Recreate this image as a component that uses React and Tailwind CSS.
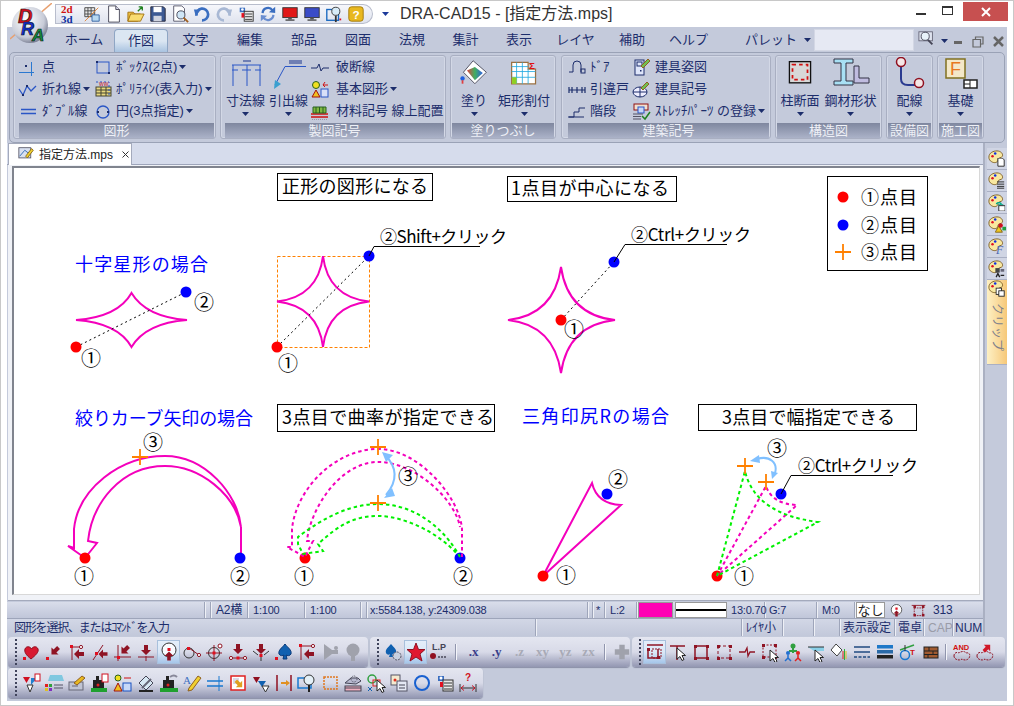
import React from 'react';

const R = '#8f1424';
const NAVY = '#1c2d6b';
const BLUE = '#2a56c6';

// fat arrow, pointing down at rot=0
const Arr = ({ x = 10, y = 9, rot = 0, s = 1, c = R }) => (
  <polygon transform={`translate(${x} ${y}) rotate(${rot}) scale(${s})`} points="-2,-5 2,-5 2,0 5,0 0,5 -5,0 -2,0" fill={c} />
);
const Sq = ({ x, y, s = 3, c = '#e01020' }) => <rect x={x} y={y} width={s} height={s} fill={c} />;
const Hole = ({ x, y, r = 1.6, c = R }) => <circle cx={x} cy={y} r={r} fill="#fff" stroke={c} />;
const Ic = ({ s = 20, w, h, box, children }) => (
  <svg width={w || s} height={h || s} viewBox={box || '0 0 20 20'} className="shrink-0" fill="none">{children}</svg>
);
const Q = ({ children }) => <Ic s={18}>{children}</Ic>;
const Cursor = ({ x = 9, y = 7 }) => (
  <path transform={`translate(${x} ${y})`} d="M0 0V11L3 8.500L5 12.500L7 11.500L5 7.500H8.500Z" fill="#fff" stroke="#222" />
);
const Red4 = ({ a = 4, b = 15 }) => (
  <>
    <Sq x={a - 1} y={a - 1} c={R} /><Sq x={b - 1} y={a - 1} c={R} /><Sq x={a - 1} y={b - 1} c={R} /><Sq x={b - 1} y={b - 1} c={R} />
  </>
);

// quick access toolbar
const qat = [
  <Ic key="a"><text x="1" y="9" fontSize="11" fontWeight="700" fontFamily="Liberation Serif" fill="#d01010">2d</text><text x="1" y="19" fontSize="11" fontWeight="700" fontFamily="Liberation Serif" fill="#1030a0">3d</text></Ic>,
  <Q key="b"><path d="M2 3H13V13H2ZM2 6.500H13M2 10H13M5.500 3V13M9 3V13" stroke="#444" fill="#e8e8e8" /><path d="M2 18L17 3" stroke="#e08030" /><path d="M10 11H18V18H10Z" fill="#b8d8f0" stroke="#3060a0" /></Q>,
  <Q key="c"><path d="M4 1H12L16 5V19H4Z" fill="#fff" stroke="#445" /><path d="M12 1V5H16" stroke="#445" fill="#dde" /></Q>,
  <Q key="d"><path d="M1 8H7L9 10H15L12 18H1Z" fill="#f0c040" stroke="#a07010" /><path d="M1 18L4 10H19L15 18Z" fill="#f8dc70" stroke="#a07010" /><path d="M12 7L17 2M17 2H13M17 2V6" stroke="#208020" strokeWidth="1.500" /></Q>,
  <Q key="e"><path d="M2 2H16L18 4V18H2Z" fill="#3d5a94" stroke="#223" /><rect x="5" y="2" width="9" height="6" fill="#fff" /><rect x="5" y="12" width="9" height="6" fill="#d0d4e0" /></Q>,
  <Q key="f"><path d="M3 1H12L15 4V18H3Z" fill="#fff" stroke="#556" /><circle cx="11" cy="11" r="4.500" fill="#cfe6f6" stroke="#445" /><path d="M14 14L19 19" stroke="#a06020" strokeWidth="2" /></Q>,
  <Q key="g"><path d="M4 12A6.500 6.500 0 1 1 10 17" stroke="#3a6ec0" strokeWidth="3" /><polygon points="1,5 9,5 3,12" fill="#3a6ec0" /></Q>,
  <Q key="h"><path d="M16 12A6.500 6.500 0 1 0 10 17" stroke="#a8b8d4" strokeWidth="3" /><polygon points="19,5 11,5 17,12" fill="#a8b8d4" /></Q>,
  <Q key="i"><path d="M3 3H9V8H3Z" fill="#3a6ec0" /><circle cx="6" cy="5" r="1.500" fill="#fff" /><rect x="8" y="7" width="10" height="11" fill="#e8e8e8" stroke="#333" /><path d="M9 10H17M9 13H17M9 16H17" stroke="#333" /><rect x="5" y="9" width="3" height="5" fill="#e01020" /></Q>,
  <Q key="j"><path d="M4 9A6 6 0 0 1 15 6" stroke="#3a6ec0" strokeWidth="2.500" /><polygon points="18,2 18,9 11,8" fill="#3a6ec0" /><path d="M16 11A6 6 0 0 1 5 14" stroke="#6a8ed0" strokeWidth="2.500" /><polygon points="2,18 2,11 9,12" fill="#6a8ed0" /></Q>,
  <Q key="k"><rect x="2" y="3" width="16" height="11" fill="#e01818" stroke="#333" /><rect x="8" y="14" width="4" height="2" fill="#555" /><rect x="5" y="16" width="10" height="1.500" fill="#444" /></Q>,
  <Q key="l"><rect x="2" y="3" width="16" height="11" fill="#3a4cc8" stroke="#333" /><rect x="8" y="14" width="4" height="2" fill="#555" /><rect x="5" y="16" width="10" height="1.500" fill="#444" /></Q>,
  <Q key="m"><rect x="2" y="5" width="13" height="12" stroke="#1868c0" strokeWidth="1.500" /><circle cx="12" cy="7" r="4.500" fill="#d8ecf8" stroke="#333" /><path d="M12 12V19" stroke="#333" strokeWidth="2" /><Sq x="16" y="15" s="2" /></Q>,
  <Q key="n"><rect x="2" y="2" width="16" height="16" rx="3" fill="#e8b820" stroke="#a07808" /><text x="10" y="15" textAnchor="middle" fontSize="13" fontWeight="700" fontFamily="Liberation Sans" fill="#fff">?</text></Q>,
];

// ribbon small icons
const rb = {
  point: <Ic><path d="M1 15.500H16M13.500 5V19" stroke="#2a78d0" /><rect x="7" y="8" width="2" height="2" fill={NAVY} /></Ic>,
  box: <Ic><rect x="4" y="5" width="12" height="11" stroke={BLUE} /><rect x="3" y="4" width="2" height="2" fill={NAVY} /><rect x="15" y="15" width="2" height="2" fill={NAVY} /></Ic>,
  poly: <Ic><path d="M1 10L5 16L9 7L13 12L18 7" stroke={BLUE} strokeWidth="1.300" /><rect x="4" y="15" width="2" height="2" fill={NAVY} /><rect x="8" y="6" width="2" height="2" fill={NAVY} /></Ic>,
  table: <Ic><rect x="3" y="8" width="15" height="9" fill="#e8d880" stroke="#443" /><path d="M3 11H18M3 14H18M8 8V17M13 8V17" stroke="#443" /><path d="M3 3H16V18" stroke={BLUE} strokeDasharray="2 2" /><text x="6" y="7" fontSize="5" fill="#d01010" fontFamily="Liberation Sans">WW</text></Ic>,
  dbl: <Ic><path d="M3 8.500H18M3 12.500H18" stroke={BLUE} strokeWidth="1.400" /></Ic>,
  circ: <Ic><circle cx="10" cy="11" r="6" stroke={BLUE} strokeWidth="1.300" /><rect x="4" y="10" width="2" height="2" fill={NAVY} /><rect x="14" y="10" width="2" height="2" fill={NAVY} /></Ic>,
  brk: <Ic><path d="M1 11H7L9 7L11 14L13 11H19" stroke={NAVY} /></Ic>,
  shape: <Ic><circle cx="6" cy="6" r="3.500" fill="#f0e020" stroke="#286020" /><polygon points="6,11 10,18 2,18" fill="#f0c020" stroke="#a01010" /><rect x="11" y="10" width="7" height="8" fill="#d8e0f8" stroke={BLUE} /><path d="M18 6H13M13 6L15 3M13 6L15 8" stroke="#d01010" /></Ic>,
  mat: <Ic><path d="M1 13H18M1 16H18" stroke="#d01010" strokeWidth="1.400" /><path d="M3 6H16V12H3Z" fill="#80b840" stroke="#286020" /><path d="M6 6V12M9.500 6V12M13 6V12" stroke="#286020" /><path d="M2 18.500H18" stroke="#99a" strokeDasharray="1 1" /></Ic>,
  door: <Ic><path d="M2 15H6V8A4 4 0 0 1 14 8V15" stroke={NAVY} /><rect x="14" y="12" width="4" height="4" stroke={NAVY} /></Ic>,
  slide: <Ic><path d="M2 8V14M5 8V14M15 8V14M18 8V14M2 11H18M10 8V14" stroke={NAVY} strokeWidth="1.200" /></Ic>,
  stair: <Ic><path d="M1 16H17M2 16H7V11H12V7H18" stroke={NAVY} /></Ic>,
  fig: <Ic><rect x="4" y="3" width="9" height="15" fill="#dfe6fa" stroke={NAVY} /><rect x="6" y="5" width="5" height="4" stroke={NAVY} /><rect x="9" y="13" width="1.500" height="1.500" fill={NAVY} /><path d="M10 9L17 2L19 4L12 11Z" fill="#70c050" stroke="#906020" /></Ic>,
  sym: <Ic><ellipse cx="9" cy="13" rx="7" ry="5" fill="#eef" stroke={NAVY} /><path d="M2 13H16M9 8V18" stroke={NAVY} /><path d="M10 9L16 3L18 5L12 11Z" fill="#70c050" stroke="#906020" /></Ic>,
  stretch: <Ic><rect x="3" y="3" width="14" height="6" fill="#f0e0d0" stroke="#901010" /><rect x="7" y="6" width="6" height="6" fill="#c8d8f8" stroke={BLUE} /><path d="M2 13H12M2 15.500H10M2 18H10" stroke="#556" /><path d="M11 15L14 18L19 11" stroke="#208020" strokeWidth="1.500" /></Ic>,
};

// ribbon large icons
const lg = {
  dim: <Ic w={34} h={34} box="0 0 34 34"><rect x="14" y="3" width="8" height="2" fill="#6f7fb4" /><path d="M3 8H32" stroke={BLUE} /><path d="M3 13H9M13 13H22M26 13H32" stroke={BLUE} /><path d="M4 8V29M18 8V29M31 8V29" stroke={BLUE} /></Ic>,
  lead: <Ic w={34} h={34} box="0 0 34 34"><rect x="17" y="3" width="13" height="4" fill="#6f7fb4" /><path d="M34 9.500H13L3 28" stroke={BLUE} /><polygon points="2,32 3,23 9,27" fill="#3aa0d0" /></Ic>,
  fill: <Ic w={30} h={30} box="0 0 34 34"><polygon points="16,2 31,15 18,28 5,15" fill="#fff" stroke="#445" /><defs><linearGradient id="pg" x1="0" x2="1"><stop offset="0" stopColor="#e04040" /><stop offset=".5" stopColor="#40b060" /><stop offset="1" stopColor="#3060e0" /></linearGradient></defs><polygon points="9,13 18,9 27,16 18,24" fill="url(#pg)" /><circle cx="4" cy="22" r="2.500" fill="#2060e0" /><path d="M4 24V28" stroke="#e04040" strokeWidth="2" /></Ic>,
  grid: <Ic w={28} h={28} box="0 0 34 34"><path d="M2 3H22V11H31V29H2Z" fill="#fff" stroke="#9a7040" strokeWidth="1.500" /><path d="M2 8H22M2 14H31M2 21H31M8 3V29M15 3V29M22 11V29" stroke="#20a8e0" /><rect x="2.500" y="21" width="5.500" height="8" fill="#90d020" /><text x="23" y="11" fontSize="12" fontWeight="700" fill="#e01010" fontFamily="Liberation Sans">Σ</text></Ic>,
  col: <Ic w={30} h={30} box="0 0 34 34"><rect x="5" y="3" width="24" height="24" fill="#d8d8d8" stroke="#111" strokeWidth="1.500" /><rect x="8.500" y="6.500" width="17" height="17" stroke="#d01010" strokeWidth="2" strokeDasharray="4 3.500" /></Ic>,
  steel: <Ic w={44} h={34} box="0 0 44 34"><path d="M5 2H24V6H17V24H24V28H5V24H12V6H5Z" fill="#a8e0f4" stroke="#334" /><path d="M25 9H30V21H40V26H25Z" fill="#c0bce0" stroke="#334" /></Ic>,
  wire: <Ic w={34} h={34} box="0 0 34 34"><path d="M8 9V22Q8 28 15 28H22" stroke="#2a3a90" strokeWidth="2" /><circle cx="8" cy="5" r="4.500" fill="#f4e6e6" stroke="#901020" strokeWidth="1.500" /><circle cx="26" cy="26" r="4.500" fill="#f4e6e6" stroke="#901020" strokeWidth="1.500" /></Ic>,
  base: <Ic w={36} h={34} box="0 0 36 34"><rect x="3" y="2" width="19" height="19" fill="#f4e8c8" stroke="#807020" strokeWidth="1.500" /><text x="12.500" y="18" textAnchor="middle" fontSize="18" fill="#e87820" fontFamily="Liberation Sans">F</text><rect x="21" y="23" width="13" height="8" fill="#fff" stroke="#222" strokeWidth="1.500" /><path d="M27 23V31M21 27H27" stroke="#222" /></Ic>,
};

const Caret = ({ c = 'text-[#1c2d6b]' }) => (
  <svg width="7" height="4" viewBox="0 0 7 4" className={`shrink-0 ${c}`}><polygon points="0,0 7,0 3.500,4" fill="currentColor" /></svg>
);

const Small = ({ icon, label, caret, gap = 'gap-[4px]' }) => (
  <div className={`flex items-center h-[22px] whitespace-nowrap ${gap}`}>
    {icon}
    <span className="flex items-center gap-[2px]">{label}{caret && <Caret />}</span>
  </div>
);

const Large = ({ icon, label, w }) => (
  <div className={`flex flex-col items-center ${w}`}>
    <div className="h-[36px] flex items-center justify-center">{icon}</div>
    <div className="h-[18px] leading-[18px] whitespace-nowrap">{label}</div>
    <div className="h-[8px] flex items-center"><Caret /></div>
  </div>
);

const Group = ({ title, w, className = '', children }) => (
  <div className={`${w} ${className} h-[84px] flex flex-col border border-[#a9afc2] rounded-[3px] shadow-[inset_0_0_0_1px_#d3d8e6]`}>
    <div className="h-[67px] flex">{children}</div>
    <div className="h-[15px] mx-px bg-gradient-to-b from-[#7f879f] to-[#abb2c8] text-center text-[13px] leading-[16px] text-[#eef0f6]">{title}</div>
  </div>
);

const tabs = [
  ['ホーム', 'w-[57px] pr-[3px]'], ['作図', 'w-[54px]', true], ['文字', 'w-[55px]'], ['編集', 'w-[54px]'], ['部品', 'w-[54px]'], ['図面', 'w-[54px]'],
  ['法規', 'w-[54px]'], ['集計', 'w-[53px]'], ['表示', 'w-[54px]'], ['レイヤ', 'w-[59px]'], ['補助', 'w-[54px]'], ['ヘルプ', 'w-[59px]'],
];

function TitleBar() {
  return (
    <div className="h-[26px] flex items-center pl-[54px] bg-white shrink-0">
      <div className="w-[318px] h-[20px] flex items-center pl-[3px] rounded-r-full rounded-l-[4px] border border-[#b8bdcc] bg-gradient-to-b from-[#f6f7fb] to-[#dfe3ee]">
        {qat.map((icon, i) => <div key={i} className="w-[22px] flex justify-center">{icon}</div>)}
      </div>
      <div className="ml-[9px] mr-[11px]"><Caret c="text-[#1c3a9a]" /></div>
      <div className="text-[16px] text-[#333]">DRA-CAD15 - [指定方法.mps]</div>
      <div className="ml-auto flex items-start self-start h-[21px] mr-[5px]">
        <div className="w-[26px] h-[19px] flex items-center justify-center"><div className="w-[10px] h-[2px] mt-[6px] bg-[#333]" /></div>
        <div className="w-[26px] h-[19px] mr-[3px] flex items-center justify-center"><div className="w-[11px] h-[9px] border border-t-2 border-[#333]" /></div>
        <div className="w-[45px] h-[19px] mt-[1px] bg-[#c75050] flex items-center justify-center">
          <svg width="10" height="10" viewBox="0 0 10 10"><path d="M1 1L9 9M9 1L1 9" stroke="#fff" strokeWidth="2" /></svg>
        </div>
      </div>
    </div>
  );
}

function TabRow() {
  return (
    <div className="h-[25px] flex items-end pl-[50px] text-[13px] text-[#1c2d6b] shrink-0">
      {tabs.map(([t, w, on]) => (
        <div key={t} className={`${w} text-center flex items-center justify-center ${on ? 'h-[23px] rounded-t-[4px] border border-b-0 border-[#8fa6c4] bg-gradient-to-b from-[#dbe6f2] via-[#dbe6f2] to-[#a9c3e0]' : 'h-[24px]'}`}>{t}</div>
      ))}
      <div className="ml-[27px] w-[70px] flex items-center gap-[7px] h-[24px] whitespace-nowrap">パレット<Caret /></div>
      <div className="ml-[-1px] mb-px w-[100px] h-[22px] bg-[#e6e9f3] border border-[#d3d7e4]" />
      <div className="ml-[4px] mb-[2px] h-[22px] flex items-center">
        <Ic s={18}><rect x="1" y="2" width="15" height="10" fill="#dfe3ef" stroke="#667" /><circle cx="8" cy="7" r="4.500" fill="#e8f2fa" stroke="#445" /><path d="M11 11L16 16" stroke="#445" strokeWidth="2" /></Ic>
      </div>
      <div className="ml-[5px] mb-[9px]"><Caret /></div>
      <div className="ml-[6px] mb-[8px] w-[8px] h-[3px] bg-[#666]" />
      <div className="ml-[10px] mb-[4px]">
        <svg width="12" height="12" viewBox="0 0 12 12"><path d="M3.500 3V1H11V8H8.500M1 3.500H8.500V11H1Z" fill="none" stroke="#666" strokeWidth="1.200" /></svg>
      </div>
      <div className="ml-[8px] mb-[4px]">
        <svg width="13" height="13" viewBox="0 0 13 13"><path d="M2 2L11 11M11 2L2 11" stroke="#666" strokeWidth="2.500" /></svg>
      </div>
    </div>
  );
}

function Ribbon() {
  return (
    <div className="mx-[2px] h-[91px] shrink-0 border border-[#9aa2b6] rounded-[5px] pl-[3px] pt-[2px] flex gap-[4px]">
      <Group title="図形" w="w-[203px]" className="pl-[4px]">
        <div className="w-[75px]">
          <Small icon={rb.point} label="点" />
          <Small icon={rb.poly} label="折れ線" caret />
          <Small icon={rb.dbl} label="ﾀﾞﾌﾞﾙ線" />
        </div>
        <div>
          <Small icon={rb.box} label="ﾎﾞｯｸｽ(2点)" caret gap="gap-[3px]" />
          <Small icon={rb.table} label="ﾎﾟﾘﾗｲﾝ(表入力)" caret gap="gap-[3px]" />
          <Small icon={rb.circ} label="円(3点指定)" caret gap="gap-[3px]" />
        </div>
      </Group>
      <Group title="製図記号" w="w-[226px]" className="pl-[3px]">
        <Large icon={lg.dim} label="寸法線" w="w-[43px]" />
        <Large icon={lg.lead} label="引出線" w="w-[43px]" />
        <div>
          <Small icon={rb.brk} label="破断線" gap="gap-[6px]" />
          <Small icon={rb.shape} label="基本図形" caret gap="gap-[6px]" />
          <Small icon={rb.mat} label="材料記号 線上配置" gap="gap-[6px]" />
        </div>
      </Group>
      <Group title="塗りつぶし" w="w-[106px]">
        <Large icon={lg.fill} label="塗り" w="w-[46px]" />
        <Large icon={lg.grid} label="矩形割付" w="w-[54px]" />
      </Group>
      <Group title="建築記号" w="w-[210px]" className="ml-[1px] pl-[5px]">
        <div className="w-[64px]">
          <Small icon={rb.door} label="ﾄﾞｱ" gap="gap-[3px]" />
          <Small icon={rb.slide} label="引違戸" gap="gap-[3px]" />
          <Small icon={rb.stair} label="階段" gap="gap-[3px]" />
        </div>
        <div>
          <Small icon={rb.fig} label="建具姿図" />
          <Small icon={rb.sym} label="建具記号" />
          <Small icon={rb.stretch} label="ｽﾄﾚｯﾁﾊﾟｰﾂ の登録" caret />
        </div>
      </Group>
      <Group title="構造図" w="w-[107px]">
        <Large icon={lg.col} label="柱断面" w="w-[48px]" />
        <Large icon={lg.steel} label="鋼材形状" w="w-[53px]" />
      </Group>
      <Group title="設備図" w="w-[47px]">
        <Large icon={lg.wire} label="配線" w="w-full" />
      </Group>
      <Group title="施工図" w="w-[47px]">
        <Large icon={lg.base} label="基礎" w="w-full" />
      </Group>
    </div>
  );
}

const CircleNo = ({ x, y, n, s = 20 }) => (
  <text x={x} y={y + 7} textAnchor="middle" fontSize={s} fill="#000">{n}</text>
);
const Plus = ({ x, y, s = 8 }) => (
  <path d={`M${x - s} ${y}H${x + s}M${x} ${y - s}V${y + s}`} stroke="#ff8000" strokeWidth="1.800" />
);
const Dot = ({ x, y, c }) => <circle cx={x} cy={y} r="5.500" fill={c} />;
const Boxed = ({ x, y, w, h, tx, len, children }) => (
  <>
    <rect x={x + 0.5} y={y + 0.5} width={w} height={h} fill="#fff" stroke="#000" />
    <text x={tx} y={y + h / 2 + 6.500} fontSize="18" fill="#000" textLength={len}>{children}</text>
  </>
);
const Title = ({ x, y, len, children }) => (
  <text x={x} y={y + 6.500} fontSize="18" fill="#0000ff" textLength={len}>{children}</text>
);
const LegendRow = ({ y, n }) => (
  <text x="861" y={y} fontSize="18" fill="#000" textLength={56}>{n}点目</text>
);

const PINK = '#f400bc';
const GREEN = '#00f000';
const magentaArrow = 'M462 558V530C460 500 420 450 378 450C335 450 296 490 292 530V548L287 548L305 558L313 542L307 542C310 510 340 463 378 463C415 463 455 500 460 528';
const greenArrow = 'M460 558C445 530 415 505 378 505C345 505 315 525 298 538V545L303 555L323 552L318 545C335 530 350 517 378 517C405 517 440 535 457 555';

function Drawing() {
  return (
    <svg width="966" height="426" viewBox="14 169 966 426" className="block font-['Noto_Sans_CJK_JP',sans-serif]" fill="none">
      <Boxed x={277} y={174} w={155} h={27} tx={282} len={146}>正形の図形になる</Boxed>
      <Boxed x={507} y={177} w={169} h={25} tx={511} len={158}>1点目が中心になる</Boxed>
      <Boxed x={277} y={405} w={217} h={27} tx={282} len={212}>3点目で曲率が指定できる</Boxed>
      <Boxed x={698} y={405} w={218} h={26} tx={722} len={173}>3点目で幅指定できる</Boxed>

      <Title x={75} y={265} len={133}>十字星形の場合</Title>
      <Title x={75} y={419} len={178}>絞りカーブ矢印の場合</Title>
      <Title x={522} y={417} len={147}>三角印尻Rの場合</Title>

      {/* legend */}
      <rect x="827.500" y="177.500" width="100" height="94" fill="#fff" stroke="#000" />
      <Dot x={843} y={198} c="#ff0000" />
      <Dot x={843} y={226} c="#0000ff" />
      <Plus x={843} y={253} />
      <LegendRow y={205} n="①" />
      <LegendRow y={233} n="②" />
      <LegendRow y={260} n="③" />

      {/* star 1 */}
      <path d="M76 321Q118 318 131.500 294Q146 318 187 321Q146 324 131.500 348Q118 324 76 321Z" stroke={PINK} strokeWidth="2" />
      <path d="M76 348L186 293" stroke="#000" strokeDasharray="2 3" />
      <Dot x={76} y={348} c="#ff0000" />
      <Dot x={186} y={293} c="#0000ff" />
      <CircleNo x={91} y={360} n="①" />
      <CircleNo x={204} y={304} n="②" />

      {/* star 2 */}
      <rect x="277.500" y="257.500" width="92" height="91" stroke="#ff8000" strokeDasharray="3 2" />
      <path d="M277 302.500Q318 298 323 257Q328 298 369 302.500Q328 307 323 348Q318 307 277 302.500Z" stroke={PINK} strokeWidth="2" />
      <path d="M277 348L369 257" stroke="#000" strokeDasharray="2 3" />
      <Dot x={277} y={348} c="#ff0000" />
      <Dot x={369} y={257} c="#0000ff" />
      <path d="M369 257L374 247.500H480" stroke="#000" />
      <CircleNo x={288} y={365} n="①" />
      <text x="380" y="244" fontSize="17" fill="#000" textLength={127}>②Shift+クリック</text>

      {/* star 3 */}
      <path d="M508 321Q554 316 561 268Q568 316 615 321Q568 326 561 374Q554 326 508 321Z" stroke={PINK} strokeWidth="2" />
      <path d="M561 321L614 263" stroke="#000" strokeDasharray="2 3" />
      <Dot x={561} y={321} c="#ff0000" />
      <Dot x={614} y={263} c="#0000ff" />
      <path d="M614 263L625 245.500H727" stroke="#000" />
      <CircleNo x={574} y={331} n="①" />
      <text x="631" y="242" fontSize="17" fill="#000" textLength={120}>②Ctrl+クリック</text>

      {/* curved arrow */}
      <path d="M241 558V528C238 495 205 457 165 457C120 457 78 490 74 530V549L68 547L85 559L97 544L88 542C92 505 120 467 165 467C200 467 235 495 241 528" stroke={PINK} strokeWidth="2" />
      <Plus x={140} y={458} />
      <Dot x={85} y={559} c="#ff0000" />
      <Dot x={240} y={559} c="#0000ff" />
      <CircleNo x={153} y={444} n="③" />
      <CircleNo x={84} y={578} n="①" />
      <CircleNo x={240} y={578} n="②" />

      {/* curved arrow, two states */}
      <Dot x={305} y={559} c="#ff0000" />
      <Dot x={460} y={559} c="#0000ff" />
      <path d={magentaArrow} stroke={PINK} strokeWidth="2" strokeDasharray="3.500 3" />
      <path d={greenArrow} stroke={GREEN} strokeWidth="2" strokeDasharray="3.500 3" />
      <Plus x={378} y={448} />
      <Plus x={378} y={504} />
      <path d="M385 456C399 470 396 484 386 496" stroke="#80c0ff" strokeWidth="2" />
      <polygon points="382,453 393,456 386,463" fill="#80c0ff" />
      <polygon points="384,499 392,489 395,497" fill="#80c0ff" />
      <CircleNo x={408} y={478} n="③" />
      <CircleNo x={304} y={578} n="①" />
      <CircleNo x={463} y={578} n="②" />

      {/* triangle */}
      <path d="M543 577L592 484Q597 505 621 506Z" stroke={PINK} strokeWidth="2" />
      <Dot x={543} y={577} c="#ff0000" />
      <Dot x={607} y={495} c="#0000ff" />
      <CircleNo x={618} y={481} n="②" />
      <CircleNo x={566} y={577} n="①" />

      {/* triangle, two states */}
      <Dot x={717} y={577} c="#ff0000" />
      <Dot x={781} y={495} c="#0000ff" />
      <path d="M717 577L766 487Q772 505 797 506L717 577Z" stroke={PINK} strokeWidth="2" strokeDasharray="3.500 3" />
      <path d="M717 577L745 472Q755 515 818 523L717 577Z" stroke={GREEN} strokeWidth="2" strokeDasharray="3.500 3" />
      <Plus x={745} y={467} />
      <Plus x={766} y={483} />
      <path d="M757 460C770 456 778 464 775 474" stroke="#80c0ff" strokeWidth="2" />
      <polygon points="750,462 759,456 760,464" fill="#80c0ff" />
      <polygon points="772,480 771,472 778,474" fill="#80c0ff" />
      <path d="M781 495L791 476.500H893" stroke="#000" />
      <CircleNo x={777} y={450} n="③" />
      <CircleNo x={744} y={578} n="①" />
      <text x="798" y="473" fontSize="17" fill="#000" textLength={120}>②Ctrl+クリック</text>
    </svg>
  );
}

const Cell = ({ w, className = '', children }) => (
  <div className={`${w} h-full flex items-center shrink-0 whitespace-nowrap border-r border-[#9ea5ba] shadow-[1px_0_0_#eef0f6] ${className}`}>{children}</div>
);

function StatusBars() {
  return (
    <>
      <div className="h-[17px] mt-px flex shrink-0 text-[11px] tracking-[-0.2px] text-[#1c2d6b] bg-gradient-to-b from-[#d9ddea] to-[#c0c6d9] border-b border-[#9ea5ba]">
        <Cell w="w-[198px]" />
        <Cell w="w-[6px]" />
        <Cell w="w-[37px]" className="pl-[5px] text-[12px]">A2横</Cell>
        <Cell w="w-[57px]" className="pl-[5px]">1:100</Cell>
        <Cell w="w-[56px]" className="pl-[5px]">1:100</Cell>
        <Cell w="w-[6px]" />
        <Cell w="w-[221px]" className="pl-[3px]">x:5584.138, y:24309.038</Cell>
        <Cell w="w-[5px]" />
        <Cell w="w-[12px]" className="pl-[3px]">*</Cell>
        <Cell w="w-[32px]" className="pl-[5px]">L:2</Cell>
        <div className="w-[38px] h-full shrink-0 pl-px pr-[2px]"><div className="h-full bg-[#ff00b4] border border-[#999]" /></div>
        <div className="w-[52px] h-full shrink-0 bg-white border border-[#999] flex items-center"><div className="w-full h-[2px] bg-black" /></div>
        <Cell w="w-[38px]" className="pl-[4px]">13:0.70</Cell>
        <Cell w="w-[52px]" className="pl-[4px]">G:7</Cell>
        <Cell w="w-[38px]" className="pl-[5px]">M:0</Cell>
        <div className="w-[29px] h-full shrink-0 ml-[1px] bg-white border border-[#999] text-[13px] tracking-normal text-[#222] flex items-center justify-center leading-none">なし</div>
        <div className="w-[22px] h-full shrink-0 flex items-center justify-center">
          <Ic s={15}><circle cx="10" cy="9" r="7" fill="#fff" stroke="#333" /><rect x="8.500" y="6" width="3" height="3" fill="#e01020" /><Arr x={10} y={14} rot={180} s={0.8} /></Ic>
        </div>
        <div className="w-[22px] h-full shrink-0 flex items-center justify-center">
          <Ic s={17}><path d="M2 4H18" stroke={R} /><rect x="5" y="7" width="10" height="9" stroke={R} strokeDasharray="2 1" /><Red4 a={5} b={15} /></Ic>
        </div>
        <div className="ml-[4px] text-[12px] leading-[16px]">313</div>
      </div>
      <div className="h-[17px] flex shrink-0 text-[12px] text-[#1c2d6b] bg-gradient-to-b from-[#d2d7e6] to-[#c2c8da]">
        <Cell w="w-[529px]" className="pl-[7px] tracking-[-1.2px]">図形を選択、またはｺﾏﾝﾄﾞを入力</Cell>
        <Cell w="w-[206px]" />
        <Cell w="w-[41px]" className="pl-[4px]">ﾚｲﾔ小</Cell>
        <Cell w="w-[31px]" />
        <Cell w="w-[26px]" />
        <Cell w="w-[55px]" className="pl-[3px]">表示設定</Cell>
        <Cell w="w-[29px]" className="pl-[3px]">電卓</Cell>
        <Cell w="w-[29px]" className="pl-[4px] text-[#9a9ca8]">CAP</Cell>
        <div className="pl-[2px] flex items-center">NUM</div>
      </div>
    </>
  );
}

const Grip = () => (
  <div className="w-[6px] ml-[5px] shrink-0 flex flex-col gap-[2px] items-center">
    {[0, 1, 2, 3, 4, 5, 6].map(i => <div key={i} className="w-[2px] h-[2px] bg-[#40445c]" />)}
  </div>
);
const Sep = ({ m = 'mx-[8px]' }) => <div className={`w-[2px] h-[16px] bg-[#f4f5fa] border-l border-[#9095ad] shrink-0 ${m}`} />;
const Btn = ({ on, children }) => (
  <div className={`w-[23px] h-[24px] shrink-0 flex items-center justify-center ${on ? 'border border-[#a8c0dc] bg-gradient-to-b from-[#e4eefa] via-[#dbe8f6] to-[#a6c6ea]' : ''}`}>{children}</div>
);
const Bar = ({ className = '', children }) => (
  <div className={`h-[30px] flex items-center rounded-[4px] bg-gradient-to-b from-[#e4e6f0] via-[#d8dae8] to-[#9397b2] shadow-[0_1px_1px_#8a8ea6] ${className}`}>{children}</div>
);
const Axis = ({ t, off }) => (
  <Btn><span className={`font-['Liberation_Serif',serif] font-bold text-[13px] ${off ? 'text-[#a8aab6]' : 'text-[#3a3f8a]'}`}>{t}</span></Btn>
);

const GREY = '#a0a2ac';
const row1a = [
  <Ic key="1"><path d="M10 17C5 13 3 10 4 7C5 4 9 4 10.500 7C12 4 16 4 17 7C18 10 15 13 10 17Z" fill="#d81830" stroke="#901020" /><Sq x={2} y={15} /></Ic>,
  <Ic key="2"><Arr x={11} y={9} rot={45} /><Sq x={2} y={15} /></Ic>,
  <Ic key="3"><path d="M5 3V18M3 5H14" stroke={R} /><Hole x={14} y={5} /><Sq x={3} y={3} /><Arr x={12} y={12} rot={90} /></Ic>,
  <Ic key="4"><path d="M3 18L13 3" stroke={R} /><Sq x={5} y={10} /><Arr x={13} y={12} rot={90} s={0.9} /></Ic>,
  <Ic key="5"><path d="M1 15H18M5 3V19" stroke={R} /><Sq x={4} y={14} /><Arr x={12} y={8} rot={45} /></Ic>,
  <Ic key="6"><path d="M2 15H18M10 14V19" stroke={R} /><Arr x={10} y={8} /></Ic>,
  <Ic key="7"><circle cx="10" cy="8" r="7" stroke="#333" fill="#f8fbff" /><Sq x={8.500} y={6} /><Arr x={10} y={14} rot={180} s={0.9} /></Ic>,
  <Ic key="8"><circle cx="7" cy="11" r="5" stroke="#333" /><path d="M7 6L17 13" stroke={R} /><Sq x={5} y={5} /><Hole x={17} y={13} /></Ic>,
  <Ic key="9"><circle cx="9" cy="11" r="5.500" stroke="#333" /><path d="M1 11H17M9 3V19" stroke={R} /><Hole x={15} y={4} r={2} /><Sq x={7.500} y={9.500} /></Ic>,
  <Ic key="10"><Arr x={10} y={7} /><path d="M2 16H18" stroke={R} /><Hole x={3} y={16} /><Sq x={8.500} y={14.500} /><Hole x={17} y={16} /></Ic>,
  <Ic key="11"><Arr x={10} y={7} /><path d="M2 9L7 13M18 9L13 13M10 13V19" stroke="#333" /><Sq x={8.500} y={12} /></Ic>,
  <Ic key="12"><path d="M11 2C14 6 18 8 17 12C16 14 13 14 12 13L13 17H9L10 13C9 14 6 14 5 12C4 8 8 6 11 2Z" fill="#1060b0" stroke="#083878" /><Sq x={1} y={15} /></Ic>,
  <Ic key="13"><path d="M4 3V18M3 4H15" stroke={R} /><Sq x={2} y={2} /><Hole x={16} y={4} /><Arr x={12} y={12} rot={90} /></Ic>,
  <Ic key="14"><path d="M4 2L12 8V12L4 18Z" fill={GREY} /><path d="M12 8H18V12H12" fill={GREY} /><circle cx="16" cy="6" r="2" fill={GREY} /></Ic>,
  <Ic key="15"><circle cx="10" cy="8" r="6.500" fill={GREY} /><rect x="8" y="13" width="4" height="6" fill={GREY} /></Ic>,
];
const row1b = [
  <Ic key="1"><path d="M8 2C11 6 14 7 13 11C12 13 10 13 9 12L10 15H6L7 12C6 13 4 13 3 11C2 7 5 6 8 2Z" fill="#1060b0" /><circle cx="14" cy="14" r="4" fill="#c8d0e0" stroke="#556" strokeDasharray="2 1" /></Ic>,
  <Ic key="2"><polygon points="10,1 12.500,7.500 19,7.500 14,12 16,19 10,15 4,19 6,12 1,7.500 7.500,7.500" fill="#e01830" stroke="#901020" /></Ic>,
  <Ic key="3"><text x="3" y="8" fontSize="9" fontWeight="700" fontFamily="Liberation Sans" fill="#445">L.P</text><circle cx="4" cy="14" r="3" fill="#901020" /><path d="M9 15H18" stroke="#667" strokeWidth="2" strokeDasharray="2 1" /></Ic>,
];
const row1c = [
  <Ic key="1"><path d="M2 3H18" stroke={R} strokeWidth="1.500" /><path d="M3 7V16H13V7" stroke={R} strokeWidth="1.500" /><rect x="7" y="7" width="9" height="9" stroke={R} strokeDasharray="2 1" /><Sq x={2} y={6} c={R} /><Sq x={12} y={14} c={R} /></Ic>,
  <Ic key="2"><path d="M2 4H17M9 4V18" stroke={R} strokeWidth="1.500" /><Cursor x={9} y={6} /></Ic>,
  <Ic key="3"><rect x="4" y="4" width="12" height="12" stroke={R} strokeWidth="1.500" /><Red4 a={4} b={16} /></Ic>,
  <Ic key="4"><rect x="4" y="4" width="12" height="12" stroke={R} strokeDasharray="3 2" /><Red4 a={4} b={16} /></Ic>,
  <Ic key="5"><path d="M2 10H8L10 6L11 14L13 10H18" stroke={R} strokeWidth="1.300" /></Ic>,
  <Ic key="6"><rect x="3" y="3" width="13" height="12" stroke={R} strokeDasharray="2 1.500" /><Red4 a={3} b={15} /><Cursor x={10} y={8} /></Ic>,
  <Ic key="7"><circle cx="10" cy="4" r="2.500" fill="#30a040" /><path d="M10 6V11M6 9H14" stroke="#30a040" strokeWidth="2" /><circle cx="5" cy="11" r="2" fill="#2070d0" /><path d="M5 13V17M2 19L5 16L8 19" stroke="#2070d0" strokeWidth="1.500" /><circle cx="15" cy="11" r="2" fill="#e02020" /><path d="M15 13V17M12 19L15 16L18 19" stroke="#e02020" strokeWidth="1.500" /></Ic>,
  <Ic key="8"><polygon points="2,5 18,5 18,9 8,9" fill="#8ad0e8" /><path d="M2 5H18" stroke="#333" /><Cursor x={9} y={8} /></Ic>,
  <Ic key="9"><polygon points="2,8 7,2 13,8 8,14" fill="#fff" stroke="#444" /><path d="M14 9V17" stroke="#e02020" /><path d="M15.500 7V18" stroke="#30b040" /><path d="M17 9V17" stroke="#e0c020" /></Ic>,
  <Ic key="10"><path d="M2 5H18M2 10H18" stroke="#204a80" strokeWidth="1.300" /><path d="M2 15H18" stroke="#204a80" strokeWidth="1.500" strokeDasharray="3 1.500" /></Ic>,
  <Ic key="11"><rect x="2" y="3" width="16" height="3.500" fill="#1f78c8" /><rect x="2" y="8" width="16" height="3.500" fill="#2a6aa8" /><rect x="2" y="13" width="16" height="3.500" fill="#222" /></Ic>,
  <Ic key="12"><circle cx="7" cy="13" r="4.500" stroke="#1878d0" strokeWidth="1.500" /><path d="M2 8L16 3" stroke="#30a040" strokeWidth="1.500" /><path d="M7 3V9" stroke="#333" /><text x="12" y="13" fontSize="8" fontWeight="700" fill="#d01010" fontFamily="Liberation Sans">T</text></Ic>,
  <Ic key="13"><rect x="3" y="5" width="14" height="11" fill="#a05a30" stroke="#222" /><path d="M3 9H17M3 12.500H17M8 5V9M12 9V12.500M7 12.500V16" stroke="#222" /></Ic>,
];
const row1d = [
  <Ic key="1"><text x="1" y="8" fontSize="7.500" fontWeight="700" fontFamily="Liberation Sans" fill="#d01010">AND</text><path d="M2 14C2 10 6 10 7 11C9 9 13 9 14 11C17 10 19 13 17 16C15 19 11 18 10 17C8 19 2 18 2 14Z" stroke={R} strokeDasharray="2 1" /></Ic>,
  <Ic key="2"><path d="M2 14C2 10 6 10 7 11C9 9 13 9 14 11C17 10 19 13 17 16C15 19 11 18 10 17C8 19 2 18 2 14Z" stroke={R} strokeDasharray="2 1" /><Arr x={12} y={6} rot={-135} s={0.9} c="#d01828" /></Ic>,
];
const row2 = [
  <Ic key="1"><polygon points="2,4 9,4 5.500,10" fill="#d01020" /><polygon points="10,5 16,5 10,12" fill="#2080d0" /><polygon points="6,12 12,12 9,19" fill="#fff" stroke="#333" /><rect x="14" y="1" width="5" height="7" fill="#fff" stroke="#d01020" /></Ic>,
  <Ic key="2"><polygon points="6,2 18,2 20,8 4,8" fill="#80c8e0" /><rect x="1" y="11" width="3" height="3" fill="#e02020" /><rect x="5" y="11" width="3" height="3" fill="#30a040" /><rect x="1" y="15" width="3" height="3" fill="#e0c020" /><rect x="5" y="15" width="3" height="3" fill="#8030c0" /><path d="M10 12H19M10 15H19" stroke="#556" /></Ic>,
  <Ic key="3"><rect x="2" y="9" width="14" height="8" fill="#c0c4d4" stroke="#667" /><path d="M5 13H11" stroke="#667" /><path d="M7 10L15 3L18 5L10 12Z" fill="#e8b820" stroke="#906020" /></Ic>,
  <Ic key="4"><rect x="1" y="15" width="16" height="4" fill="#20a030" /><rect x="3" y="7" width="11" height="8" fill="#222" /><rect x="6" y="3" width="3" height="4" fill="#222" /><rect x="12" y="1" width="6" height="8" fill="#fff" stroke="#d01020" /><circle cx="8" cy="12" r="1.500" fill="#e02020" /></Ic>,
  <Ic key="5"><circle cx="5" cy="5" r="3" fill="#f0e020" stroke="#286020" /><polygon points="5,10 9,18 1,18" fill="#f0c020" stroke="#a01010" /><rect x="10" y="10" width="8" height="8" fill="#c8d8f8" stroke="#1850c0" /><path d="M18 5H11" stroke="#d01010" /></Ic>,
  <Ic key="6"><polygon points="3,10 10,3 17,10 10,17" fill="#d8e8f4" stroke="#445" /><path d="M6 15L15 6" stroke="#667" strokeWidth="2" /><path d="M3 18H17" stroke="#222" strokeWidth="2" /></Ic>,
  <Ic key="7"><rect x="1" y="15" width="18" height="4" fill="#20a030" /><rect x="4" y="7" width="11" height="8" fill="#222" /><rect x="7" y="3" width="3" height="4" fill="#222" /><path d="M11 4Q15 1 18 4" stroke="#889" strokeWidth="2" /><circle cx="9" cy="12" r="1.500" fill="#e02020" /></Ic>,
  <Ic key="8"><text x="1" y="11" fontSize="11" fill="#4070c0" fontFamily="Liberation Serif">A</text><path d="M7 15L16 3L19 5L10 17L6 18Z" fill="#f0d030" stroke="#906020" /></Ic>,
  <Ic key="9"><path d="M2 8H18M2 13H18" stroke="#1878d0" strokeWidth="1.500" /><path d="M14 3V18" stroke="#1878d0" /></Ic>,
  <Ic key="10"><rect x="3" y="3" width="14" height="14" fill="#fff" stroke="#e02020" strokeWidth="1.500" /><rect x="5" y="5" width="6" height="6" fill="#d8d8e8" /><Arr x={11} y={11} rot={-45} s={0.9} c="#e0a020" /></Ic>,
  <Ic key="11"><polygon points="2,4 9,4 5.500,10" fill="#901020" /><polygon points="7,8 15,8 11,14" fill="#1060b0" /><polygon points="11,13 18,13 14.500,19" fill="#fff" stroke="#333" /></Ic>,
  <Ic key="12"><path d="M3 2V18M17 2V18" stroke="#901020" strokeWidth="1.500" /><path d="M7 10H13" stroke="#e09020" strokeWidth="2" /><polygon points="12,7 16,10 12,13" fill="#e09020" /></Ic>,
  <Ic key="13"><rect x="1" y="5" width="13" height="10" stroke="#1878d0" strokeWidth="1.500" /><circle cx="12" cy="7" r="5" fill="#e4f0f8" stroke="#333" /><path d="M12 12V19" stroke="#222" strokeWidth="2" /></Ic>,
  <Ic key="14"><rect x="4" y="4" width="13" height="12" stroke="#e07820" strokeDasharray="2 1" strokeWidth="1.500" /></Ic>,
  <Ic key="15"><path d="M2 10L8 5H15L18 8L13 11Z" fill="#b8bad0" stroke="#445" /><circle cx="11" cy="6" r="3" stroke="#445" strokeDasharray="1 1" /><rect x="2" y="13" width="16" height="5" fill="#f0b0c0" stroke="#445" /><path d="M2 15H18" stroke="#445" /></Ic>,
  <Ic key="16"><circle cx="6" cy="6" r="4" stroke="#30a040" strokeWidth="1.500" /><rect x="7" y="7" width="7" height="6" stroke="#e02020" /><path d="M2 14L6 18M6 14L2 18" stroke="#1060b0" /><Cursor x={11} y={7} /></Ic>,
  <Ic key="17"><rect x="2" y="2" width="9" height="10" fill="#f4ead0" stroke="#556" /><rect x="8" y="8" width="10" height="10" fill="#e4e8f4" stroke="#556" /><circle cx="6" cy="7" r="1.500" fill="#e03020" /><path d="M10 12H16M10 15H16" stroke="#445" /></Ic>,
  <Ic key="18"><circle cx="10" cy="10" r="7" stroke="#1860d0" strokeWidth="2" /></Ic>,
  <Ic key="19"><path d="M3 3H9V8H3Z" fill="#3a6ec0" /><circle cx="6" cy="5" r="1.500" fill="#fff" /><rect x="8" y="7" width="10" height="11" fill="#e8e8e8" stroke="#333" /><path d="M9 10H17M9 13H17M9 16H17" stroke="#333" /><rect x="5" y="9" width="3" height="5" fill="#e01020" /></Ic>,
  <Ic key="20"><text x="10" y="8" textAnchor="middle" fontSize="10" fontWeight="700" fill="#d01020" fontFamily="Liberation Sans">?</text><path d="M2 11V19M18 11V19M3 15H17" stroke="#333" /><path d="M3 15L6 12.500M3 15L6 17.500M17 15L14 12.500M17 15L14 17.500" stroke="#d01020" /></Ic>,
];

const side = [
  <svg key="1" x="10" y="9" width="9" height="10" viewBox="0 0 9 10"><path d="M1 0H6L8 2V9H1Z" fill="#fff" stroke="#222" /></svg>,
  <svg key="2" x="9" y="10" width="10" height="9" viewBox="0 0 10 9"><path d="M1 1H9M1 3.500H9M1 6H9M1 8H9" stroke="#222" /></svg>,
  <svg key="3" x="8" y="9" width="11" height="10" viewBox="0 0 11 10"><path d="M1 2L4 0L7 2M3 3H9" stroke="#0a8" strokeWidth="1.500" /><rect x="4" y="4" width="7" height="6" fill="#fff" stroke="#222" /></svg>,
  <svg key="4" x="8" y="8" width="12" height="11" viewBox="0 0 12 11"><polygon points="4,3 8,10 0,10" fill="#f0c820" stroke="#806010" /><circle cx="6" cy="2.500" r="2.500" fill="#d01020" /><rect x="8" y="4" width="4" height="4" fill="#20a040" /></svg>,
  <svg key="5" x="8" y="6" width="12" height="14" viewBox="0 0 12 14"><text x="1" y="12" fontSize="13" fontStyle="italic" fontFamily="Liberation Serif" fill="#4a6ab0">F</text></svg>,
  <svg key="6" x="8" y="9" width="11" height="11" viewBox="0 0 11 11"><rect x="0" y="0" width="5" height="5" fill="#444" /><rect x="6" y="1" width="4" height="3" fill="#667" /><path d="M1 10L3 6L5 10M6 8H10" stroke="#222" strokeWidth="1.500" /></svg>,
  <svg key="7" x="8" y="8" width="11" height="11" viewBox="0 0 11 11"><rect x="1" y="1" width="6" height="7" fill="#fff" stroke="#222" /><rect x="4" y="4" width="6" height="6" fill="#fff" stroke="#222" /></svg>,
];

const Palette = ({ badge }) => (
  <svg width="18" height="18" viewBox="0 0 20 20" fill="none">
    <path d="M1 8C1 3 6 1 10 1C14 1 17 4 16 7C15 9 11 8 11 11C11 14 7 15 4 13C2 12 1 10 1 8Z" fill="#f8e8a0" stroke="#7a5a20" />
    <circle cx="5" cy="7" r="1.400" fill="#e01020" /><circle cx="8" cy="4" r="1.400" fill="#1030e0" />
    {badge}
  </svg>
);

function SideStrip() {
  return (
    <div className="w-[24px] border-l-2 border-[#aab0c2] shrink-0 pt-[5px] pl-[2px]">
      <div className="w-[20px] flex flex-col">
        {side.slice(0, 6).map((badge, i) => (
          <div key={i} className="h-[22px] flex items-center justify-center bg-[#d0d5e4] border-b border-[#aab0c4]"><Palette badge={badge} /></div>
        ))}
        <div className="h-[85px] flex flex-col items-center border-b border-[#aab0c4] bg-gradient-to-r from-[#fdf0c4] to-[#f6c878]">
          <Palette badge={side[6]} />
          <div className="mt-[5px] text-[12px] text-[#7c7f8c] [writing-mode:vertical-rl] [text-orientation:sideways] leading-none">クリップ</div>
        </div>
      </div>
    </div>
  );
}

export default function App() {
  return (
    <div className="relative w-[1014px] h-[706px] overflow-hidden bg-white flex flex-col border border-[#c8c8c8] font-['Liberation_Sans','Noto_Sans_CJK_JP',sans-serif] text-[13px] text-[#1c2d6b]">
      <TitleBar />

      {/* logo sits over the title bar and the tabs */}
      <svg className="absolute left-[9px] top-[2px]" width="42" height="42" viewBox="0 0 42 42" fill="none">
        <defs>
          <radialGradient id="ball" cx=".4" cy=".35" r=".7"><stop offset="0" stopColor="#fff" /><stop offset=".7" stopColor="#c8ccd8" /><stop offset="1" stopColor="#6e7388" /></radialGradient>
        </defs>
        <path d="M0 36L42 0" stroke="#e8a070" strokeWidth="1.500" />
        <circle cx="20" cy="22" r="18" fill="url(#ball)" />
        <text fontWeight="700" fontStyle="italic" fontFamily="Liberation Sans" stroke="#111" strokeWidth=".6">
          <tspan x="8" y="20" fontSize="20" fill="#d01020">D</tspan>
          <tspan x="11" y="32" fontSize="18" fill="#1030d0">R</tspan>
          <tspan x="22" y="38" fontSize="17" fill="#109040">A</tspan>
        </text>
      </svg>

      <div className="w-[1000px] h-[674px] ml-[6px] bg-[#c4cadb] flex flex-col">
        <TabRow />
        <Ribbon />
        <div className="flex h-[493px] shrink-0">
          <div className="w-[976px] flex flex-col shrink-0">
            <div className="h-[22px] bg-[#d6dcec] border-b border-[#9ea5ba] pl-px shrink-0">
              <div className="w-[124px] h-[22px] bg-white border border-b-0 border-[#a4aabc] flex items-center pl-[9px] text-[12px] text-[#222]">
                <Ic s={17}><rect x="1" y="2" width="14" height="12" fill="#d8e0f0" stroke="#556" /><path d="M2 12L8 5L13 9" stroke="#2060b0" /><path d="M9 12L16 3L18 5L11 14Z" fill="#f0d030" stroke="#806010" /></Ic>
                <span className="ml-[4px]">指定方法.mps</span>
                <svg className="ml-[9px]" width="7" height="7" viewBox="0 0 7 7"><path d="M0.500 0.500L6.500 6.500M6.500 0.500L0.500 6.500" stroke="#333" /></svg>
              </div>
            </div>
            <div className="flex-1 min-h-0 ml-px bg-[#f0f2f7] pl-[4px] pt-[1px] pr-[3px] pb-[4px] border-b border-[#a4aabc]">
              <div className="w-[968px] h-[429px] border-l-2 border-t-2 border-[#80848e] border-r border-b border-r-[#d8d8d8] border-b-[#d8d8d8] bg-white overflow-hidden">
                <Drawing />
              </div>
            </div>
            <StatusBars />
          </div>
          <SideStrip />
        </div>

        <div className="flex ml-px gap-[2px] mt-px shrink-0">
          <Bar className="w-[360px]">
            <Grip />
            {row1a.map((ic, i) => <Btn key={i} on={i === 6}>{ic}</Btn>)}
          </Bar>
          <Bar className="w-[260px]">
            <Grip />
            {row1b.map((ic, i) => <Btn key={i} on={i === 1}>{ic}</Btn>)}
            <Sep m="mx-[5px]" />
            <Axis t=".x" /><Axis t=".y" /><Axis t=".z" off /><Axis t="xy" off /><Axis t="yz" off /><Axis t="zx" off />
            <Sep m="mx-[4px]" />
            <Btn><Ic s={18}><path d="M7 2H13V7H18V13H13V18H7V13H2V7H7Z" fill={GREY} /></Ic></Btn>
          </Bar>
          <Bar className="w-[373px]">
            <Grip />
            {row1c.map((ic, i) => <Btn key={i} on={i === 0}>{ic}</Btn>)}
            <Sep m="mx-[3px]" />
            {row1d.map((ic, i) => <Btn key={i}>{ic}</Btn>)}
          </Bar>
        </div>
        <div className="flex ml-px mt-px shrink-0">
          <Bar className="w-[475px]">
            <Grip />
            {row2.map((ic, i) => <Btn key={i}>{ic}</Btn>)}
          </Bar>
        </div>
      </div>
    </div>
  );
}
